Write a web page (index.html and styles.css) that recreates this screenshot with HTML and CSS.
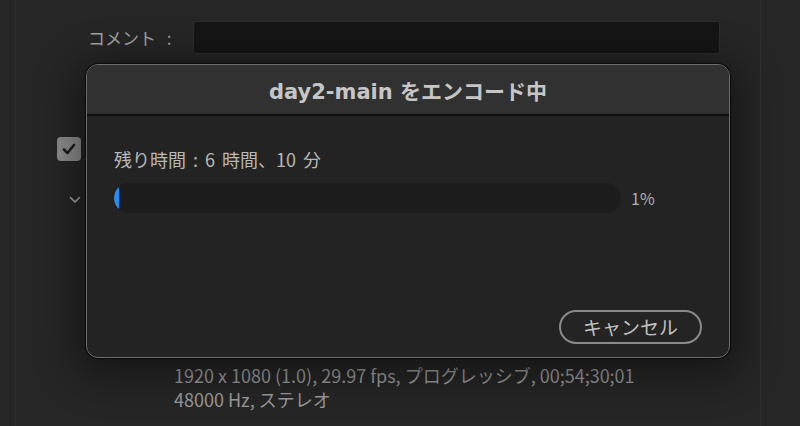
FILE: index.html
```html
<!DOCTYPE html>
<html lang="ja">
<head>
<meta charset="utf-8">
<title>エンコード中</title>
<link rel="stylesheet" href="styles.css">
</head>
<body>
<div class="app">
  <div class="panel">
    <div class="comment-row">
      <span class="comment-label">コメント :</span>
      <div class="comment-input"></div>
    </div>
    <div class="check-row">
      <span class="checkbox">
        <svg width="14" height="12" viewBox="0 0 14 12"><path d="M2 6.5 L5.5 10 L12 2" fill="none" stroke="#1e1e1e" stroke-width="2.6" stroke-linecap="round" stroke-linejoin="round"/></svg>
      </span>
    </div>
    <div class="chev-row">
      <svg width="12" height="8" viewBox="0 0 12 8"><path d="M1.5 1.5 L6 6 L10.5 1.5" fill="none" stroke="#a8a8a8" stroke-width="1.6" stroke-linecap="round" stroke-linejoin="round"/></svg>
    </div>
    <div class="info">
      <div>1920 x 1080 (1.0), 29.97 fps, プログレッシブ, 00;54;30;01</div>
      <div>48000 Hz, ステレオ</div>
    </div>
  </div>

  <div class="dialog">
    <div class="dialog-title">day2-main をエンコード中</div>
    <div class="dialog-body">
      <div class="remaining">残り時間 : 6 時間、10 分</div>
      <div class="progress-row">
        <div class="track"><div class="fill" style="width:1%"></div></div>
        <span class="pct">1%</span>
      </div>
      <div class="actions">
        <button class="cancel">キャンセル</button>
      </div>
    </div>
  </div>
</div>
</body>
</html>
```

FILE: styles.css
```css
html, body {
  margin: 0;
  padding: 0;
  background: #262626;
}
body {
  width: 800px;
  height: 426px;
  overflow: hidden;
  font-family: "DejaVu Sans", "Noto Sans CJK JP", sans-serif;
}
.app {
  position: relative;
  width: 800px;
  height: 426px;
  background: #262626;
}
.panel {
  margin-left: 15px;
  width: 746px;
  height: 426px;
  border-left: 1px solid #303030;
  border-right: 1px solid #303030;
  box-sizing: border-box;
}
.comment-row {
  display: flex;
  align-items: center;
  padding-top: 21px;
  height: 33px;
}
.comment-label {
  margin-left: 72px;
  width: 105px;
  font-family: "Noto Sans CJK JP", sans-serif;
  font-size: 17px;
  word-spacing: 7px;
  color: #a4a4a4;
}
.comment-input {
  width: 527px;
  height: 33px;
  box-sizing: border-box;
  background: #151515;
  border: 1px solid #2d2d2d;
  border-radius: 3px;
}
.check-row {
  margin-top: 83px;
  padding-left: 41px;
  height: 25px;
}
.checkbox {
  display: flex;
  align-items: center;
  justify-content: center;
  width: 24px;
  height: 24px;
  border-radius: 4px;
  background: #8e8e8e;
}
.chev-row {
  margin-top: 34px;
  padding-left: 53px;
  height: 8px;
  display: flex;
}
.info {
  margin-top: 159px;
  margin-left: 158px;
  font-family: "Noto Sans CJK JP", sans-serif;
  font-size: 18px;
  line-height: 24px;
  color: #9c9c9c;
}
.info div { white-space: nowrap; }

.dialog {
  position: absolute;
  left: 86px;
  top: 64px;
  width: 644px;
  height: 294px;
  box-sizing: border-box;
  border: 1px solid #6c6c6c;
  border-radius: 12px;
  background: #232323;
  overflow: hidden;
  display: flex;
  flex-direction: column;
  box-shadow: 0 0 0 1px #0a0a0a, 0 8px 40px 10px rgba(0,0,0,0.45);
}
.dialog-title {
  height: 49px;
  background: #313131;
  border-bottom: 2px solid #0f0f0f;
  display: flex;
  align-items: center;
  justify-content: center;
  font-family: "DejaVu Sans", "Noto Sans CJK JP", sans-serif;
  font-weight: bold;
  font-size: 21px;
  color: #c6c6c6;
}
.dialog-body {
  flex: 1;
  display: flex;
  flex-direction: column;
  padding: 31px 27px 13px 27px;
}
.remaining {
  font-family: "Noto Sans CJK JP", sans-serif;
  font-size: 18px;
  line-height: 24px;
  word-spacing: 3px;
  color: #b8b8b8;
}
.progress-row {
  margin-top: 12px;
  display: flex;
  align-items: center;
}
.track {
  width: 507px;
  height: 30px;
  border-radius: 15px;
  background: #1c1c1c;
  overflow: hidden;
}
.fill {
  height: 100%;
  min-width: 5px;
  background: #2a8cf0;
  border-radius: 15px 0 0 15px;
}
.pct {
  margin-left: 10px;
  font-family: "Noto Sans CJK JP", sans-serif;
  font-size: 16px;
  color: #b0b0b0;
}
.actions {
  margin-top: auto;
  display: flex;
  justify-content: flex-end;
}
.cancel {
  width: 143px;
  height: 34px;
  box-sizing: border-box;
  border: 2px solid #8a8a8a;
  border-radius: 17px;
  background: #242424;
  color: #c2c2c2;
  font-family: "Noto Sans CJK JP", sans-serif;
  font-size: 19px;
  line-height: 28px;
  padding: 0;
}
```
